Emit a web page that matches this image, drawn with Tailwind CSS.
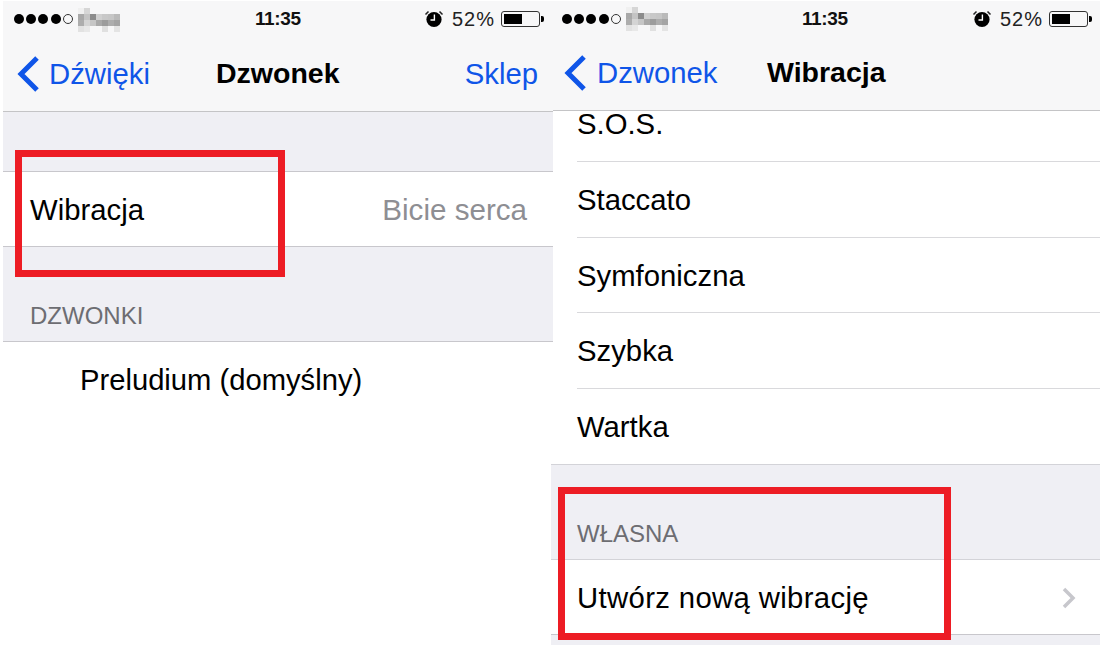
<!DOCTYPE html>
<html lang="en">
<head>
  <meta charset="UTF-8" />
  <title>Dzwonek / Wibracja</title>
  <script src="https://cdn.jsdelivr.net/npm/@tailwindcss/browser@4"></script>
</head>
<body class="bg-white">
<div class="relative w-[1100px] h-[645px] overflow-hidden flex font-['Liberation_Sans',Arial,sans-serif] text-black">

  <!-- left phone -->
  <div class="relative z-10 w-[550px] ml-[3px] mt-[1px] h-[463px] flex flex-col shrink-0">
    <div class="h-[110px] bg-[#f7f7f8] border-b border-[#c4c4c6] box-content flex flex-col shrink-0">
      <div class="h-[36px] relative flex items-center pl-[11px]">
        <div class="flex gap-[2.2px] items-center">
          <span class="size-[10px] rounded-full bg-black"></span>
          <span class="size-[10px] rounded-full bg-black"></span>
          <span class="size-[10px] rounded-full bg-black"></span>
          <span class="size-[10px] rounded-full bg-black"></span>
          <span class="size-[10px] rounded-full border border-[#333]"></span>
        </div>
        <div class="ml-[5px] grid grid-cols-[repeat(7,6px)] grid-rows-[repeat(4,6px)] blur-[0.6px] mt-[1px]">
          <i class="bg-[#f0f0f0]"></i><i class="bg-[#d6d6d6]"></i><i></i><i></i><i></i><i></i><i></i>
          <i class="bg-[#a8a8a8]"></i><i class="bg-[#c4c4c4]"></i><i class="bg-[#8c8c8c]"></i><i class="bg-[#d0d0d0]"></i><i class="bg-[#c8c8c8]"></i><i class="bg-[#c6c6c6]"></i><i class="bg-[#bababa]"></i>
          <i class="bg-[#adadad]"></i><i class="bg-[#d4d4d4]"></i><i class="bg-[#c6c6c6]"></i><i class="bg-[#a9a9a9]"></i><i class="bg-[#9c9c9c]"></i><i class="bg-[#adadad]"></i><i class="bg-[#a4a4a4]"></i>
          <i class="bg-[#e2e2e2]"></i><i class="bg-[#e8e8e8]"></i><i></i><i></i><i class="bg-[#e0e0e0]"></i><i></i><i class="bg-[#e4e4e4]"></i>
        </div>
        <span class="absolute left-[252px] top-[7px] text-[19px] leading-[22px] font-bold text-[#111] tracking-[-0.4px]">11:35</span>
        <div class="absolute right-[9px] top-0 h-[36px] flex items-center">
          <svg class="w-[20px] h-[20px] mr-[8px]" viewBox="0 0 20 20"><circle cx="10" cy="10.5" r="7.6" fill="#000"/><path d="M10.4 5.5V11H6.5" fill="none" stroke="#fff" stroke-width="1.4"/><path d="M1.5 5.5 4.5 2.5M18.5 5.5 15.5 2.5" stroke="#222" stroke-width="1.5" fill="none"/></svg>
          <span class="text-[20px] leading-none text-[#222] tracking-[1px] mr-[6px]">52%</span>
          <div class="w-[39px] h-[16px] rounded-[3px] border border-[#333] p-[2px]"><div class="h-full w-[18px] bg-black"></div></div>
          <div class="w-[3px] h-[6px] bg-black rounded-r-[2px] ml-[1px]"></div>
        </div>
      </div>
      <div class="flex-1 relative flex items-center justify-between pl-[14px] pr-[15px] pb-[1px]">
        <div class="flex items-center text-[#0f55e8] text-[29.3px]">
          <svg class="w-[24px] h-[38px] mr-[8px]" viewBox="0 0 24 38"><path d="M20 3 4 19l16 16" fill="none" stroke="#0f55e8" stroke-width="5"/></svg>
          <span>Dźwięki</span>
        </div>
        <span class="absolute left-[213px] text-[28.5px] font-bold">Dzwonek</span>
        <span class="text-[#0f55e8] text-[29.3px]">Sklep</span>
      </div>
    </div>
    <div class="h-[60px] bg-[#efeff4] border-b border-[#c8c7cc] shrink-0"></div>
    <div class="h-[75px] bg-white border-b border-[#c8c7cc] flex items-center justify-between pl-[27px] pr-[26px] pt-[2px] text-[29.3px] shrink-0">
      <span>Wibracja</span>
      <span class="text-[#8e8e93] text-[29.6px]">Bicie serca</span>
    </div>
    <div class="h-[95px] bg-[#efeff4] border-b border-[#c8c7cc] flex items-end pl-[27px] pb-[12px] text-[24px] leading-[26px] text-[#6d6d72] shrink-0">DZWONKI</div>
    <div class="flex-1 bg-white pl-[77px] pt-[20px] text-[29.2px] leading-[36px]">Preludium (domyślny)</div>
  </div>

  <!-- right phone -->
  <div class="flex-1 -ml-[2px] mt-[1px] h-[644px] flex flex-col">
    <div class="h-[109px] bg-[#f7f7f8] border-b border-[#c4c4c6] box-content flex flex-col shrink-0">
      <div class="h-[35px] relative flex items-center pl-[11px]">
        <div class="flex gap-[2.2px] items-center">
          <span class="size-[10px] rounded-full bg-black"></span>
          <span class="size-[10px] rounded-full bg-black"></span>
          <span class="size-[10px] rounded-full bg-black"></span>
          <span class="size-[10px] rounded-full bg-black"></span>
          <span class="size-[10px] rounded-full border border-[#333]"></span>
        </div>
        <div class="ml-[5px] grid grid-cols-[repeat(7,6px)] grid-rows-[repeat(4,6px)] blur-[0.6px] mt-[1px]">
          <i class="bg-[#f0f0f0]"></i><i class="bg-[#d6d6d6]"></i><i></i><i></i><i></i><i></i><i></i>
          <i class="bg-[#a8a8a8]"></i><i class="bg-[#c4c4c4]"></i><i class="bg-[#8c8c8c]"></i><i class="bg-[#d0d0d0]"></i><i class="bg-[#c8c8c8]"></i><i class="bg-[#c6c6c6]"></i><i class="bg-[#bababa]"></i>
          <i class="bg-[#adadad]"></i><i class="bg-[#d4d4d4]"></i><i class="bg-[#c6c6c6]"></i><i class="bg-[#a9a9a9]"></i><i class="bg-[#9c9c9c]"></i><i class="bg-[#adadad]"></i><i class="bg-[#a4a4a4]"></i>
          <i class="bg-[#e2e2e2]"></i><i class="bg-[#e8e8e8]"></i><i></i><i></i><i class="bg-[#e0e0e0]"></i><i></i><i class="bg-[#e4e4e4]"></i>
        </div>
        <span class="absolute left-[251px] top-[7px] text-[19px] leading-[22px] font-bold text-[#111] tracking-[-0.4px]">11:35</span>
        <div class="absolute right-[8px] top-0 h-[35px] flex items-center">
          <svg class="w-[20px] h-[20px] mr-[8px]" viewBox="0 0 20 20"><circle cx="10" cy="10.5" r="7.6" fill="#000"/><path d="M10.4 5.5V11H6.5" fill="none" stroke="#fff" stroke-width="1.4"/><path d="M1.5 5.5 4.5 2.5M18.5 5.5 15.5 2.5" stroke="#222" stroke-width="1.5" fill="none"/></svg>
          <span class="text-[20px] leading-none text-[#222] tracking-[1px] mr-[6px]">52%</span>
          <div class="w-[39px] h-[16px] rounded-[3px] border border-[#333] p-[2px]"><div class="h-full w-[18px] bg-black"></div></div>
          <div class="w-[3px] h-[6px] bg-black rounded-r-[2px] ml-[1px]"></div>
        </div>
      </div>
      <div class="flex-1 relative flex items-center pl-[13px] pb-[1px]">
        <div class="flex items-center text-[#0f55e8] text-[29.3px]">
          <svg class="w-[24px] h-[38px] mr-[9px]" viewBox="0 0 24 38"><path d="M20 3 4 19l16 16" fill="none" stroke="#0f55e8" stroke-width="5"/></svg>
          <span>Dzwonek</span>
        </div>
        <span class="absolute left-[216px] text-[28.5px] font-bold">Wibracja</span>
      </div>
    </div>
    <div class="bg-white pl-[26px] text-[29.3px] shrink-0">
      <div class="h-[51px] pb-[19px] border-b border-[#d9d9dc] flex items-end leading-[36px]">S.O.S.</div>
      <div class="h-[76px] border-b border-[#d9d9dc] flex items-center">Staccato</div>
      <div class="h-[75px] pt-[1px] border-b border-[#d9d9dc] flex items-center">Symfoniczna</div>
      <div class="h-[76px] border-b border-[#d9d9dc] flex items-center">Szybka</div>
      <div class="h-[75px] pt-[1px] flex items-center">Wartka</div>
    </div>
    <div class="h-[94px] bg-[#efeff4] border-y border-[#d3d3d8] box-content flex items-end pl-[26px] text-[24px] text-[#6d6d72] shrink-0">
      <span class="leading-[26px] mb-[12px]">WŁASNA</span>
    </div>
    <div class="h-[74px] pt-[2px] bg-white flex items-center justify-between pl-[26px] pr-[24px] text-[29.3px] shrink-0">
      <span class="tracking-[0.35px]">Utwórz nową wibrację</span>
      <svg class="w-[14px] h-[22px]" viewBox="0 0 14 22"><path d="M2 2l9 9-9 9" fill="none" stroke="#c7c7cc" stroke-width="3.5"/></svg>
    </div>
    <div class="flex-1 bg-[#efeff4] border-t border-[#c8c7cc]"></div>
  </div>

  <!-- red highlights -->
  <div class="absolute z-20 left-[15px] top-[150px] w-[270px] h-[127px] border-[7px] border-[#ed1c24]"></div>
  <div class="absolute z-20 left-[558px] top-[487px] w-[393px] h-[153px] border-[7px] border-[#ed1c24]"></div>
</div>
</body>
</html>
